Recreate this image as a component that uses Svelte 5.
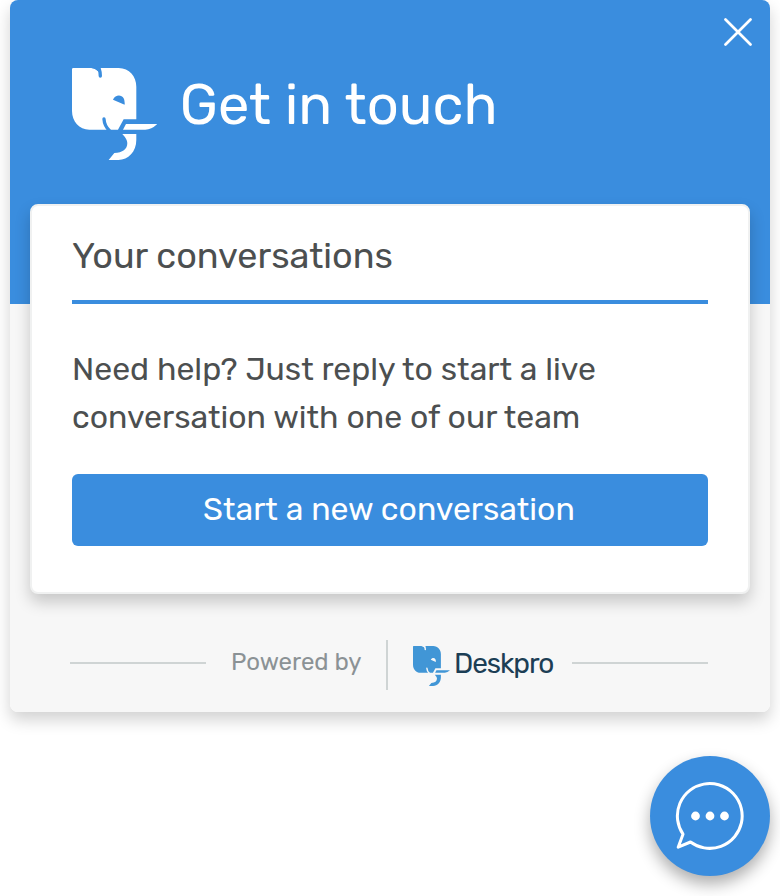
<script>
  const brand = 'Deskpro';
</script>

{#snippet logo(ink, ground)}
  <svg class="logo" viewBox="36 36 256 276" aria-hidden="true">
    <path fill={ink} d="M40 36H94Q106 36 114 45L116 36H176C208 36 229 62 229 92V190H191L174 221H88C58 221 36 196 36 165V40Q36 36 40 36Z" />
    <path fill="none" stroke={ground} stroke-width="10" stroke-linecap="round" d="M115 32Q121 44 121 60M132 189Q133 209 149 225" />
    <path fill={ground} d="M94 35H118L119 52Q108 37 94 36ZM159 131C166 116 184 115 191 127Q195 134 194 146Z" />
    <path fill={ink} d="M198 204H292Q275 221 256 221H189ZM187 234H229V252C229 287 205 312 175 312H146L163 291C188 290 202 280 202 261Q202 250 187 234Z" />
  </svg>
{/snippet}

<div class="page">
  <section class="widget">
    <header>
      {@render logo('#fff', '#3a8dde')}
      <h1>Get in touch</h1>
      <button class="close" aria-label="Close">
        <svg width="28" height="28" viewBox="0 0 28 28"><path d="M1.5 1.5 26.5 26.5M26.5 1.5 1.5 26.5" /></svg>
      </button>
    </header>
    <main>
      <h2>Your conversations</h2>
      <p>Need help? Just reply to start a live<br />conversation with one of our team</p>
      <button class="start"><span>Start a new conversation</span></button>
    </main>
    <footer>
      <i class="rule"></i>
      <span class="powered">Powered by</span>
      <i class="bar"></i>
      <div class="brand">{@render logo('#4196d6', '#f7f7f7')}<b>{brand}</b></div>
      <i class="rule"></i>
    </footer>
  </section>
  <button class="chat" aria-label="Chat">
    <svg width="70" height="70" viewBox="0 0 70 70">
      <path d="M8 53.2A32.4 32.4 0 1 1 15.5 61L3.2 66.2Z" />
      <circle cx="20.5" cy="35" r="4.4" /><circle cx="35" cy="35" r="4.4" /><circle cx="49.5" cy="35" r="4.4" />
    </svg>
  </button>
</div>

<style>
  :global(body) { margin: 0; background: #fff; }
  .page { width: 780px; height: 896px; box-sizing: border-box; padding: 0 10px; overflow: hidden; display: flex; flex-direction: column; font-family: Rubik, Roboto, sans-serif; color: #4c4f50; }
  button { border: 0; padding: 0; font: inherit; color: #fff; background: #3a8dde; }
  svg { display: block; flex: none; }
  h1, h2, p { margin: 0; font-weight: 400; white-space: nowrap; }
  .widget { height: 712px; border-radius: 8px; display: flex; flex-direction: column; background: linear-gradient(#3a8dde 304px, #f7f7f7 304px); box-shadow: 0 8px 16px rgba(0, 0, 0, .18); }
  header { height: 204px; display: flex; align-items: flex-start; padding: 0 18px 0 62px; box-sizing: border-box; color: #fff; }
  header .logo { width: 85.3px; height: 92px; margin-top: 68px; }
  h1 { font-size: 56px; line-height: 66px; margin: 72px 0 0 22.5px; }
  .close { margin: 18px 0 0 auto; }
  .close path { stroke: #fff; stroke-width: 2.7; stroke-linecap: round; }
  main { height: 390px; margin: 0 20px; box-sizing: border-box; border: 2px solid #f0f1f1; border-radius: 8px; background: #fff; padding: 0 40px; box-shadow: 0 8px 16px rgba(0, 0, 0, .2); display: flex; flex-direction: column; }
  h2 { height: 98px; box-sizing: border-box; padding-top: 28px; font-size: 36px; line-height: 44px; border-bottom: 4px solid #3a8dde; }
  p { margin-top: 41px; font-size: 32px; line-height: 48px; }
  .start { margin-top: 33px; height: 72px; border-radius: 6px; font-size: 32px; }
  .start span { display: block; line-height: 38px; margin: -2px 2px 0 0; }
  footer { height: 118px; display: flex; align-items: center; padding: 20px 62px 0 60px; box-sizing: border-box; white-space: nowrap; }
  .rule { width: 136px; height: 2px; background: #cfd4d4; }
  .powered { width: 131px; margin: -2px 0 0 25px; color: #8b9295; font-size: 24px; line-height: 28px; }
  .bar { width: 2px; height: 50px; margin: 4px 0 0 24px; background: #cfd4d4; }
  .brand { display: flex; align-items: center; width: 159px; margin: 6px 0 0 25px; }
  .brand .logo { width: 37px; height: 40px; }
  b { font-size: 28px; line-height: 32px; font-weight: 400; letter-spacing: -1.1px; margin: -5px 0 0 4px; color: #1c3e55; }
  .chat { width: 120px; height: 120px; margin: 44px 0 0 auto; border-radius: 50%; display: flex; align-items: center; justify-content: center; box-shadow: 0 8px 16px rgba(0, 0, 0, .32); }
  .chat path { fill: none; stroke: #fff; stroke-width: 3; stroke-linejoin: round; }
  .chat circle { fill: #fff; }
</style>
